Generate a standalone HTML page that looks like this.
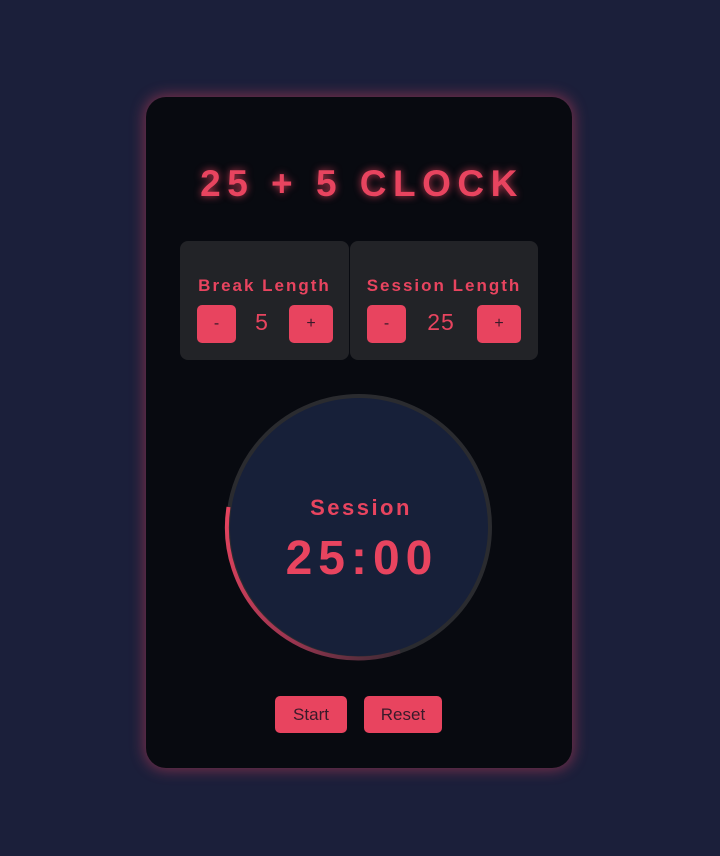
<!DOCTYPE html>
<html><head><meta charset="utf-8"><style>
*{margin:0;padding:0;box-sizing:border-box}
body{width:720px;height:856px;background:#1b1f3a;font-family:"Liberation Sans",sans-serif;position:relative;overflow:hidden}
.card{position:absolute;left:146px;top:97px;width:426px;height:671px;background:#080a10;border-radius:20px;box-shadow:0 0 14px 2px rgba(232,68,95,0.45)}
.title{position:absolute;left:146px;width:426px;top:164px;text-align:center;color:#e8445f;font-weight:bold;font-size:37px;letter-spacing:6.5px;text-indent:6px;text-shadow:0 0 8px rgba(232,68,95,0.8);line-height:40px}
.panel{position:absolute;top:241px;height:119px;background:#222327;border-radius:8px}
.lbl{position:absolute;color:#e8445f;font-weight:bold;font-size:17px;letter-spacing:2px;top:276px;text-align:center}
.btn{position:absolute;background:#e8445f;border-radius:5px;color:#3a1a2a;font-size:16px;text-align:center;line-height:38px;height:38px;top:305px}
.val{position:absolute;top:309px;color:#e8445f;font-size:23px;text-align:center;width:40px;letter-spacing:1px}
.b2{position:absolute;top:696px;height:37px;background:#e8445f;border-radius:5px;color:#3a1a2a;font-size:17px;line-height:37px;text-align:center}
</style></head><body>
<div class="card"></div>
<div class="title">25 + 5 CLOCK</div>
<div class="panel" style="left:180px;width:169px"></div>
<div class="panel" style="left:350px;width:188px"></div>
<div class="lbl" style="left:180px;width:169px">Break Length</div>
<div class="lbl" style="left:350px;width:188px">Session Length</div>
<div class="btn" style="left:197px;width:39px">-</div>
<div class="val" style="left:242px">5</div>
<div class="btn" style="left:289px;width:44px">+</div>
<div class="btn" style="left:367px;width:39px">-</div>
<div class="val" style="left:421px">25</div>
<div class="btn" style="left:477px;width:44px">+</div>
<svg style="position:absolute;left:0;top:0" width="720" height="856">
<defs><linearGradient id="g" x1="226" y1="507" x2="400" y2="660" gradientUnits="userSpaceOnUse"><stop offset="0" stop-color="#e8445f"/><stop offset="0.6" stop-color="#9a3550"/><stop offset="1" stop-color="#3a2a34"/></linearGradient></defs>
<circle cx="359" cy="527" r="131" fill="#172039" stroke="#2a2b2f" stroke-width="4"/>
<path d="M228.5 507 A131 131 0 0 0 400 651.5" fill="none" stroke="url(#g)" stroke-width="4"/>
<text x="361" y="515" text-anchor="middle" fill="#e8445f" font-family="Liberation Sans" font-weight="bold" font-size="22" letter-spacing="2.5">Session</text>
<text x="362" y="574" text-anchor="middle" fill="#e8445f" font-family="Liberation Sans" font-weight="bold" font-size="48" letter-spacing="6">25:00</text>
</svg>
<div class="b2" style="left:275px;width:72px">Start</div>
<div class="b2" style="left:364px;width:78px">Reset</div>
</body></html>
